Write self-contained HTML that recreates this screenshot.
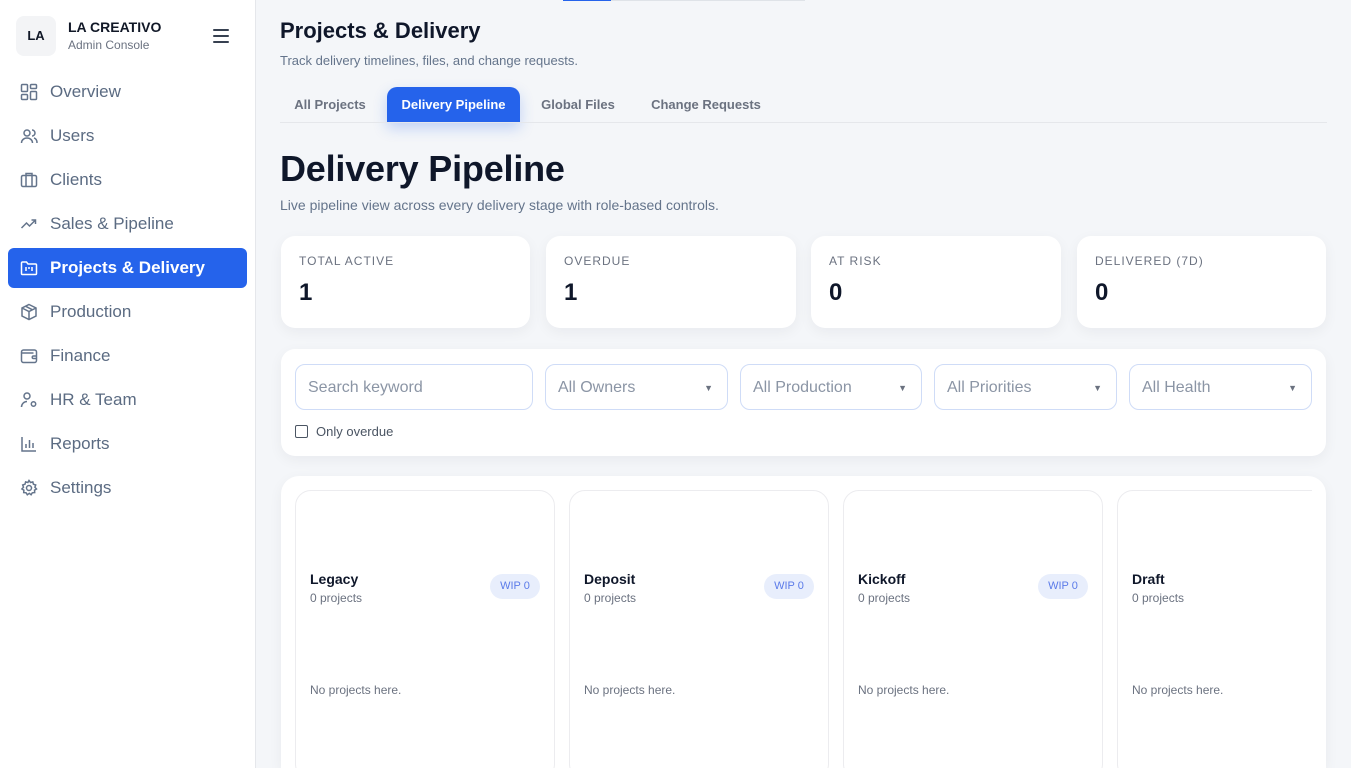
<!DOCTYPE html>
<html style="overflow:hidden;height:768px"><head><meta charset="utf-8"><style>
*{box-sizing:border-box;margin:0;padding:0}
body{width:1351px;height:768px;overflow:hidden;font-family:"Liberation Sans",sans-serif;background:#f4f6f9;position:relative}
.sb{position:absolute;left:0;top:0;width:256px;height:768px;background:#fff;border-right:1px solid #e5e7eb}
.logo{position:absolute;left:16px;top:16px;width:40px;height:40px;border-radius:8px;background:#f3f4f6;font-size:13px;font-weight:700;color:#111827;text-align:center;line-height:40px}
.brand{position:absolute;left:68px;top:19px;font-size:14px;font-weight:700;color:#111827}
.brand2{position:absolute;left:68px;top:38px;font-size:12px;color:#6b7280}
.ham{position:absolute;left:213px;top:29px;width:16px}
.ham i{display:block;height:2px;background:#374151;margin-bottom:4px;border-radius:1px}
.nav{position:absolute;left:8px;width:239px;height:40px;border-radius:6px;font-size:17px;color:#5b6b82;line-height:40px;padding-left:42px}
.nav svg{position:absolute;left:12px;top:11px}
.nav.act{background:#2563eb;color:#fff;font-weight:600}
.abs{position:absolute}
.tab{position:absolute;top:87px;height:35px;line-height:35px;font-size:13px;font-weight:700;color:#6b7280;text-align:center}
.card{position:absolute;background:#fff;border-radius:14px;box-shadow:0 4px 14px rgba(15,23,42,.05)}
.lbl{position:absolute;left:18px;top:18px;font-size:12px;letter-spacing:1px;color:#6b7280}
.val{position:absolute;left:18px;top:43px;font-size:24px;font-weight:800;color:#0f172a}
.inp{position:absolute;top:364px;height:46px;border:1px solid #cfdcf7;border-radius:10px;font-size:16px;color:#8b95a5;line-height:46px;padding-left:12px;background:#fff}
.inp b{position:absolute;right:14px;top:0;font-size:9px;color:#6b7280;font-weight:400}
.col{position:absolute;top:490px;width:260px;height:290px;border:1px solid #ececef;border-radius:16px;background:#fff}
.ct{position:absolute;left:14px;top:80px;font-size:14px;font-weight:700;color:#0f172a}
.cs{position:absolute;left:14px;top:100px;font-size:12px;color:#6b7280}
.wip{position:absolute;right:14px;top:83px;width:50px;height:25px;border-radius:13px;background:#e8eefc;color:#5b7be9;font-size:11px;text-align:center;line-height:25px}
.np{position:absolute;left:14px;top:192px;font-size:12px;color:#6b7280}
</style></head><body>
<div class="sb">
<div class="logo">LA</div>
<div class="brand">LA CREATIVO</div>
<div class="brand2">Admin Console</div>
<div class="ham"><i></i><i></i><i style="margin:0"></i></div>
<div class="nav" style="top:72px"><svg width="18" height="18" viewBox="0 0 18 18" fill="none" stroke="#64748b" stroke-width="1.5"><rect x="1.5" y="1.5" width="6" height="7" rx="1"/><rect x="10.5" y="1.5" width="6" height="4" rx="1"/><rect x="1.5" y="11.5" width="6" height="5" rx="1"/><rect x="10.5" y="8.5" width="6" height="8" rx="1"/></svg>Overview</div>
<div class="nav" style="top:116px"><svg width="18" height="18" viewBox="0 0 18 18" fill="none" stroke="#64748b" stroke-width="1.5"><circle cx="7" cy="6" r="3"/><path d="M1.5 16c0-3 2.5-5 5.5-5s5.5 2 5.5 5M12 3a3 3 0 010 6M14 11c2 .5 3 2.5 3 5"/></svg>Users</div>
<div class="nav" style="top:160px"><svg width="18" height="18" viewBox="0 0 18 18" fill="none" stroke="#64748b" stroke-width="1.5"><rect x="1.5" y="4.5" width="15" height="11" rx="1.5"/><path d="M6 4.5V2.5h6v2M6 4.5v11M12 4.5v11"/></svg>Clients</div>
<div class="nav" style="top:204px"><svg width="18" height="18" viewBox="0 0 18 18" fill="none" stroke="#64748b" stroke-width="1.5"><path d="M1.5 13l5-5 3 3 6-6M11.5 5h4v4"/></svg>Sales &amp; Pipeline</div>
<div class="nav act" style="top:248px"><svg width="18" height="18" viewBox="0 0 18 18" fill="none" stroke="#fff" stroke-width="1.5"><path d="M1.5 4a1 1 0 011-1h4l1.5 2h7.5a1 1 0 011 1v8.5a1 1 0 01-1 1h-13a1 1 0 01-1-1z"/><path d="M6 8v4M9 8v2M12 8v4"/></svg>Projects &amp; Delivery</div>
<div class="nav" style="top:292px"><svg width="18" height="18" viewBox="0 0 18 18" fill="none" stroke="#64748b" stroke-width="1.5"><path d="M9 1.5l7 3.5v8l-7 3.5-7-3.5v-8zM2 5l7 3.5 7-3.5M9 8.5v8M5.5 3.2l7 3.6"/></svg>Production</div>
<div class="nav" style="top:336px"><svg width="18" height="18" viewBox="0 0 18 18" fill="none" stroke="#64748b" stroke-width="1.5"><rect x="1.5" y="3" width="15" height="12.5" rx="2"/><path d="M1.5 6h12M16.5 9h-3a1.2 1.2 0 000 2.5h3"/></svg>Finance</div>
<div class="nav" style="top:380px"><svg width="18" height="18" viewBox="0 0 18 18" fill="none" stroke="#64748b" stroke-width="1.5"><circle cx="7" cy="5" r="3"/><path d="M1.5 16c0-3 2.5-5.5 5.5-5.5"/><circle cx="13.5" cy="13" r="2.2"/></svg>HR &amp; Team</div>
<div class="nav" style="top:424px"><svg width="18" height="18" viewBox="0 0 18 18" fill="none" stroke="#64748b" stroke-width="1.5"><path d="M2 2v14h14M6 13V9M9.5 13V5M13 13V8"/></svg>Reports</div>
<div class="nav" style="top:468px"><svg width="18" height="18" viewBox="0 0 18 18" fill="none" stroke="#64748b" stroke-width="1.5"><circle cx="9" cy="9" r="2.5"/><path d="M9 1.5l1.5 2 2.3-.6.6 2.3 2.3.8-.8 2.2 1.6 1.8-2 1.2.2 2.4-2.4.2-1.2 2-1.8-1.5-2 1.5-1.2-2-2.4-.2.2-2.4-2-1.2 1.6-1.8-.8-2.2 2.3-.8.6-2.3 2.3.6z"/></svg>Settings</div>
</div>
<div class="abs" style="left:563px;top:0;width:48px;height:1px;background:#2563eb"></div>
<div class="abs" style="left:611px;top:0;width:194px;height:1px;background:#dfe3e8"></div>
<div class="abs" style="left:280px;top:18px;font-size:22px;font-weight:700;color:#0f172a">Projects &amp; Delivery</div>
<div class="abs" style="left:280px;top:53px;font-size:13px;color:#64748b">Track delivery timelines, files, and change requests.</div>
<div class="tab" style="left:280px;width:100px">All Projects</div>
<div class="tab" style="left:387px;width:133px;background:#2563eb;color:#fff;border-radius:10px 10px 0 0;box-shadow:0 6px 14px rgba(37,99,235,.25)">Delivery Pipeline</div>
<div class="tab" style="left:530px;width:96px">Global Files</div>
<div class="tab" style="left:640px;width:132px">Change Requests</div>
<div class="abs" style="left:280px;top:122px;width:1047px;height:1px;background:#e5e7eb"></div>
<div class="abs" style="left:280px;top:148px;font-size:36px;font-weight:800;color:#0f172a;letter-spacing:-.2px">Delivery Pipeline</div>
<div class="abs" style="left:280px;top:197px;font-size:14px;color:#64748b">Live pipeline view across every delivery stage with role-based controls.</div>
<div class="card" style="left:281px;top:236px;width:249px;height:92px"><div class="lbl">TOTAL ACTIVE</div><div class="val">1</div></div>
<div class="card" style="left:546px;top:236px;width:250px;height:92px"><div class="lbl">OVERDUE</div><div class="val">1</div></div>
<div class="card" style="left:811px;top:236px;width:250px;height:92px"><div class="lbl">AT RISK</div><div class="val">0</div></div>
<div class="card" style="left:1077px;top:236px;width:249px;height:92px"><div class="lbl">DELIVERED (7D)</div><div class="val">0</div></div>
<div class="card" style="left:281px;top:349px;width:1045px;height:107px"></div>
<div class="inp" style="left:295px;width:238px">Search keyword</div>
<div class="inp" style="left:545px;width:183px">All Owners<b>▼</b></div>
<div class="inp" style="left:740px;width:182px">All Production<b>▼</b></div>
<div class="inp" style="left:934px;width:183px">All Priorities<b>▼</b></div>
<div class="inp" style="left:1129px;width:183px">All Health<b>▼</b></div>
<div class="abs" style="left:295px;top:425px;width:13px;height:13px;border:1px solid #4b5563;border-radius:2px;background:#fff"></div>
<div class="abs" style="left:316px;top:424px;font-size:13px;color:#4b5563">Only overdue</div>
<div class="card" style="left:281px;top:476px;width:1045px;height:292px;border-radius:18px 18px 0 0"></div>
<div class="abs" style="left:295px;top:476px;width:1017px;height:292px;overflow:hidden">
<div class="col" style="left:0;top:14px"><div class="ct">Legacy</div><div class="cs">0 projects</div><div class="wip">WIP 0</div><div class="np">No projects here.</div></div>
<div class="col" style="left:274px;top:14px"><div class="ct">Deposit</div><div class="cs">0 projects</div><div class="wip">WIP 0</div><div class="np">No projects here.</div></div>
<div class="col" style="left:548px;top:14px"><div class="ct">Kickoff</div><div class="cs">0 projects</div><div class="wip">WIP 0</div><div class="np">No projects here.</div></div>
<div class="col" style="left:822px;top:14px"><div class="ct">Draft</div><div class="cs">0 projects</div><div class="wip">WIP 0</div><div class="np">No projects here.</div></div>
</div>
</body></html>
